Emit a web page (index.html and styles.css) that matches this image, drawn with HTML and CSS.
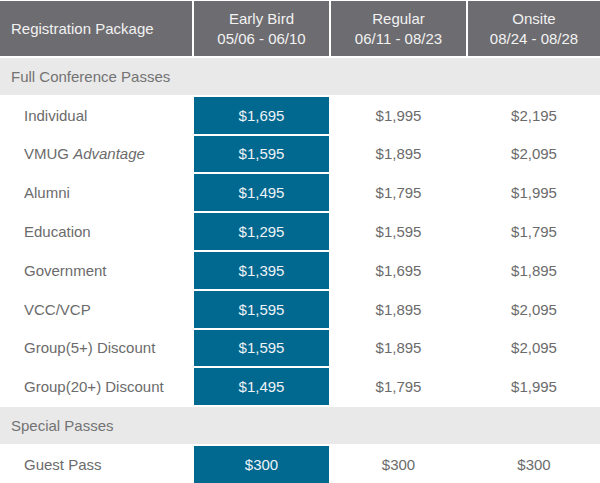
FILE: index.html
```
<!DOCTYPE html>
<html>
<head>
<meta charset="utf-8">
<link rel="stylesheet" href="styles.css">
</head>
<body>
<div class="pricing">
  <div class="hd hd-left">Registration Package</div>
  <div class="hd">Early Bird<br>05/06 - 06/10</div>
  <div class="hd">Regular<br>06/11 - 08/23</div>
  <div class="hd">Onsite<br>08/24 - 08/28</div>

  <div class="section">Full Conference Passes</div>

  <div class="label">Individual</div><div class="early">$1,695</div><div class="price">$1,995</div><div class="price">$2,195</div>
  <div class="label"><span>VMUG <em>Advantage</em></span></div><div class="early">$1,595</div><div class="price">$1,895</div><div class="price">$2,095</div>
  <div class="label">Alumni</div><div class="early">$1,495</div><div class="price">$1,795</div><div class="price">$1,995</div>
  <div class="label">Education</div><div class="early">$1,295</div><div class="price">$1,595</div><div class="price">$1,795</div>
  <div class="label">Government</div><div class="early">$1,395</div><div class="price">$1,695</div><div class="price">$1,895</div>
  <div class="label">VCC/VCP</div><div class="early">$1,595</div><div class="price">$1,895</div><div class="price">$2,095</div>
  <div class="label">Group(5+) Discount</div><div class="early">$1,595</div><div class="price">$1,895</div><div class="price">$2,095</div>
  <div class="label">Group(20+) Discount</div><div class="early">$1,495</div><div class="price">$1,795</div><div class="price">$1,995</div>

  <div class="section">Special Passes</div>

  <div class="label">Guest Pass</div><div class="early">$300</div><div class="price">$300</div><div class="price">$300</div>
</div>
</body>
</html>
```
FILE: styles.css
```
html, body {
  margin: 0;
  padding: 0;
  background: #ffffff;
}
body {
  font-family: "Liberation Sans", Arial, sans-serif;
  font-size: 15px;
  overflow: hidden;
}
.pricing {
  display: grid;
  grid-template-columns: 192px 135px 135px 132px;
  grid-auto-rows: 36.8px;
  grid-template-rows: 55px;
  column-gap: 2px;
  row-gap: 2px;
  padding: 1px 0 0 0;
  width: 600px;
}
.hd {
  background: #6d6c71;
  color: #f2f2f2;
  display: flex;
  align-items: center;
  justify-content: center;
  text-align: center;
  line-height: 20px;
  padding-top: 1px;
}
.hd-left {
  justify-content: flex-start;
  text-align: left;
  padding-left: 11px;
}
.section {
  grid-column: 1 / -1;
  background: #e9e9e9;
  color: #737373;
  display: flex;
  align-items: center;
  padding-left: 11px;
}
.label {
  display: flex;
  align-items: center;
  padding-left: 24px;
  color: #6b6b6b;
}
.label em {
  font-style: italic;
}
.early {
  background: #016890;
  color: #eef3f6;
  display: flex;
  align-items: center;
  justify-content: center;
}
.price {
  display: flex;
  align-items: center;
  justify-content: center;
  color: #6b6b6b;
}
```
